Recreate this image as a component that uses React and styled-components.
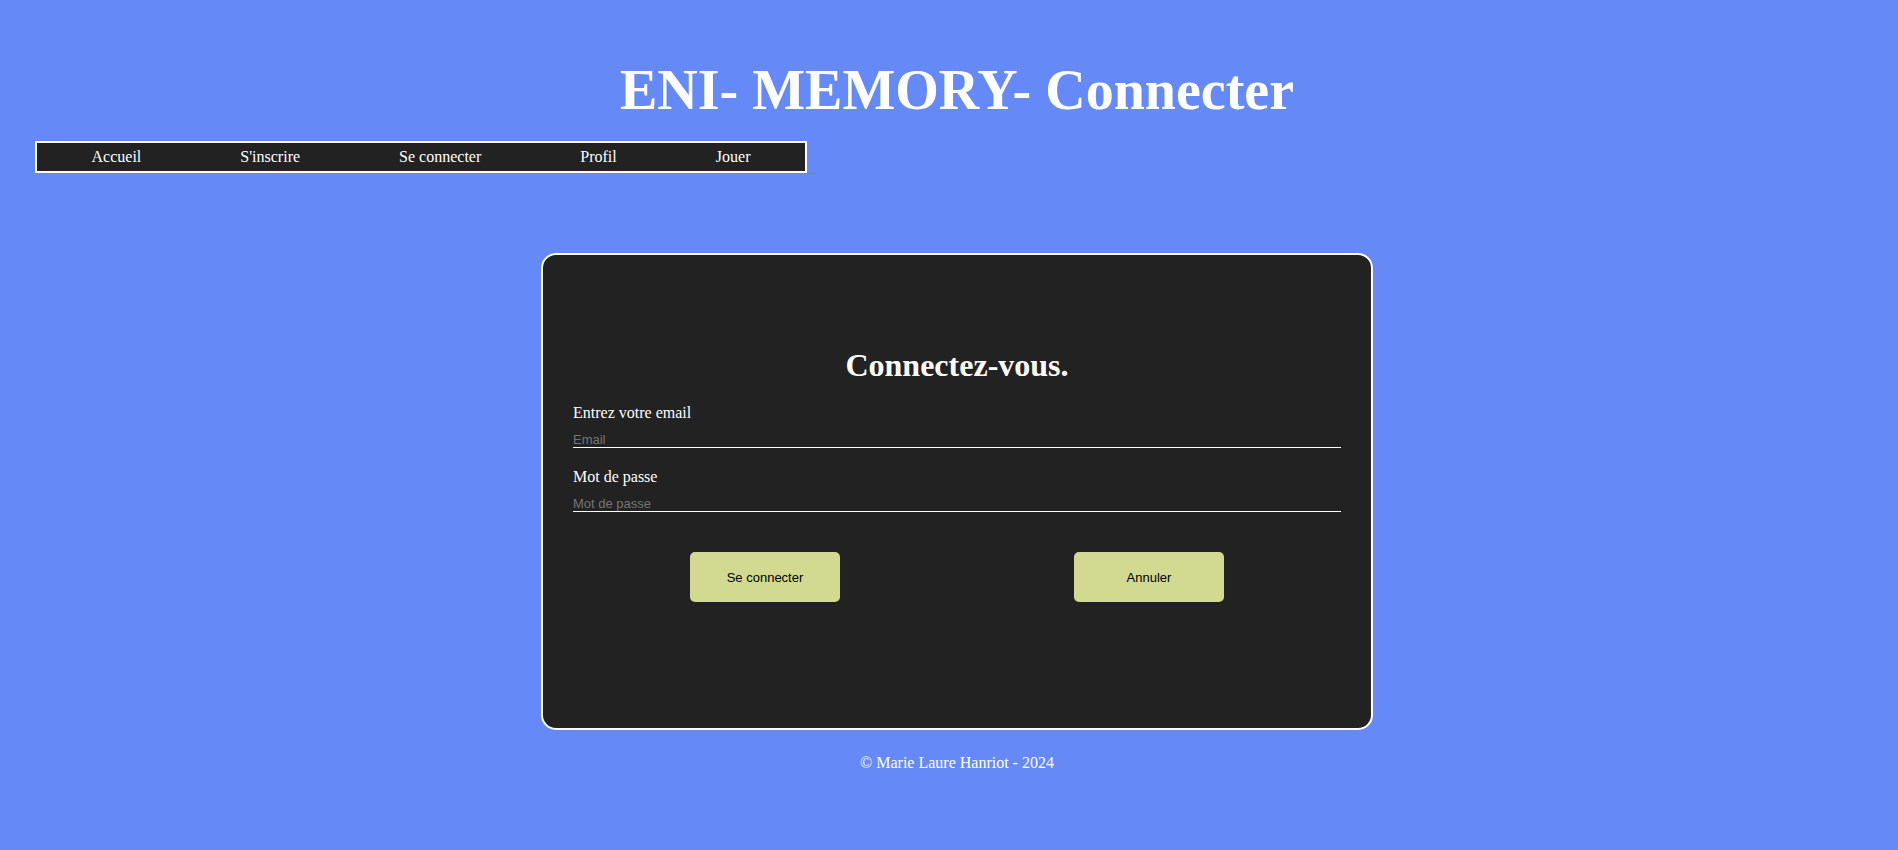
import styled, { createGlobalStyle } from "styled-components";

const GlobalStyle = createGlobalStyle`
  body {
    margin: 0;
    color: white;
    background-color: #658af8;
    font-family: "Liberation Serif", "Times New Roman", serif;
    font-size: 16px;
  }
`;

const Page = styled.div`
  padding: 58px 19px 24px 35px;
`;

const Title = styled.h1`
  margin: 0 0 19px;
  font-size: 56px;
  line-height: 64px;
  text-align: center;
`;

const Nav = styled.nav`
  max-width: 768px;
  border: 2px solid white;
  background-color: #222;
`;

const NavList = styled.ul`
  display: flex;
  justify-content: space-around;
  margin: 0;
  padding: 5px;
  line-height: 18px;
  list-style: none;
`;

const NavLink = styled.a`
  color: inherit;
  text-decoration: none;

  &:hover {
    text-decoration: underline;
  }
`;

const Card = styled.form`
  max-width: 768px;
  margin: 80px auto 24px;
  padding: 92px 30px 126px;
  border: 2px solid white;
  border-radius: 15px;
  background-color: #222;
`;

const Heading = styled.h2`
  margin: 0 0 20px;
  font-size: 32px;
  line-height: 37px;
  text-align: center;
`;

const Field = styled.div`
  display: flex;
  flex-direction: column;
  gap: 10px;
  margin-bottom: 20px;
  line-height: 18px;
`;

const Input = styled.input`
  height: 15px;
  padding: 0;
  color: white;
  background: transparent;
  border: none;
  border-bottom: 1px solid white;
  font-family: "Liberation Sans", Arial, sans-serif;
  font-size: 13px;
  outline: none;

  &::placeholder {
    color: #757575;
  }
`;

const Actions = styled.div`
  display: flex;
  justify-content: space-around;
  padding-top: 20px;
`;

const Button = styled.button`
  width: 150px;
  height: 50px;
  color: black;
  background-color: #d2da92;
  border: none;
  border-radius: 5px;
  font-family: "Liberation Sans", Arial, sans-serif;
  font-size: 13px;
  cursor: pointer;
`;

const Footer = styled.footer`
  line-height: 18px;
  text-align: center;
`;

const links = ["Accueil", "S'inscrire", "Se connecter", "Profil", "Jouer"];

function App() {
  return (
    <Page>
      <GlobalStyle />
      <header>
        <Title>ENI- MEMORY- Connecter</Title>
        <Nav>
          <NavList>
            {links.map((link) => (
              <li key={link}>
                <NavLink href="#">{link}</NavLink>
              </li>
            ))}
          </NavList>
        </Nav>
      </header>

      <main>
        <Card onSubmit={(e) => e.preventDefault()}>
          <Heading>Connectez-vous.</Heading>
          <Field>
            <label htmlFor="email">Entrez votre email</label>
            <Input id="email" type="email" placeholder="Email" />
          </Field>
          <Field>
            <label htmlFor="password">Mot de passe</label>
            <Input id="password" type="password" placeholder="Mot de passe" />
          </Field>
          <Actions>
            <Button type="submit">Se connecter</Button>
            <Button type="reset">Annuler</Button>
          </Actions>
        </Card>
      </main>

      <Footer>© Marie Laure Hanriot - 2024</Footer>
    </Page>
  );
}

export default App;
